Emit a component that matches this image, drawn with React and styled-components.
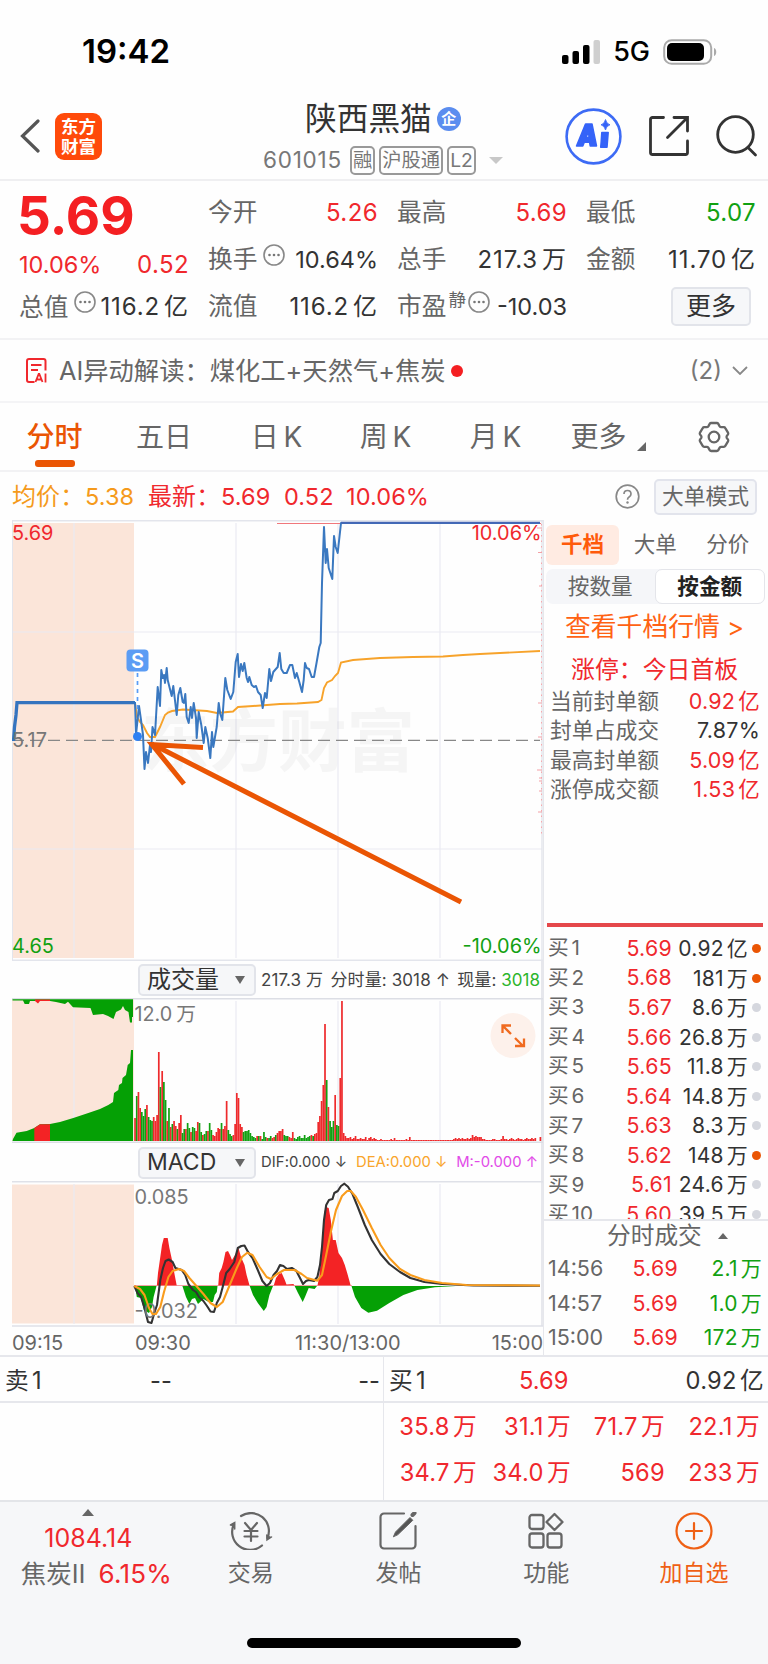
import React from "react";
import styled, { createGlobalStyle } from "styled-components";

const RED = "#f0282d";
const GREEN = "#12a112";
const ORANGE = "#ea5504";
const GRAY = "#666";
const DARK = "#333";
const LINE = "#e6e7ec";

const Global = createGlobalStyle`
  * { box-sizing: border-box; }
  body { margin: 0; background: #fefefe; }
  svg { display: block; flex: none; }
  svg text { font-family: Inter, "Noto Sans CJK SC", sans-serif; }
`;

const Screen = styled.div`
  width: 768px;
  height: 1664px;
  overflow: hidden;
  display: flex;
  flex-direction: column;
  background: #fefefe;
  color: ${DARK};
  font-family: Inter, "Noto Sans CJK SC", sans-serif;
  font-size: 24px;
  line-height: 1;
  white-space: nowrap;
`;

const Text = styled.span`
  font-size: ${(p) => p.$size || 24}px;
  color: ${(p) => p.$color || "inherit"};
  font-weight: ${(p) => p.$weight || 400};
  letter-spacing: ${(p) => p.$track || 0}px;
`;

/* an amount followed by its unit, set close together */
const Unit = styled.span`
  word-spacing: -0.15em;
  letter-spacing: ${(p) => (p.$wide ? 0.9 : 0.25)}px;
`;
const RowLabel = styled.span`
  word-spacing: -0.14em;
`;

/* ---------- status bar ---------- */
const StatusBar = styled.div`
  height: 95px;
  padding: 8px 51px 0 82px;
  display: flex;
  align-items: center;
  justify-content: space-between;
  color: #000;
`;
const StatusIcons = styled.div`
  display: flex;
  align-items: center;
  gap: 13px;
`;

/* ---------- header ---------- */
const Header = styled.header`
  height: 86px;
  display: flex;
  justify-content: space-between;
  padding: 0 10px 0 20px;
  border-bottom: 2px solid #efeff1;
`;
const HeaderSide = styled.div`
  display: flex;
  align-items: center;
  width: 238px;
  padding-bottom: 2px;
  gap: ${(p) => p.$gap}px;
  justify-content: ${(p) => (p.$end ? "flex-end" : "flex-start")};
`;
const Logo = styled.div`
  width: 47px;
  height: 47px;
  border-radius: 9px;
  background: #ff4a0a;
  color: #fff;
  font: 700 17.5px/20.5px "Noto Sans CJK SC", sans-serif;
  display: flex;
  align-items: center;
  justify-content: center;
  text-align: center;
`;
const TitleBlock = styled.div`
  display: flex;
  flex-direction: column;
  padding-top: 7px;
  width: 260px;
`;
const TitleRow = styled.div`
  display: flex;
  align-items: center;
  height: 34px;
  padding-left: 46px;
  gap: 5px;
`;
const Verified = styled.span`
  width: 24px;
  height: 24px;
  border-radius: 50%;
  background: #5b8def;
  color: #fff;
  font-size: 15px;
  font-weight: 700;
  line-height: 24px;
  text-align: center;
`;
const CodeRow = styled.div`
  display: flex;
  align-items: center;
  gap: 4px;
  padding: 0 16px 0 4px;
  margin-top: 10px;
  color: #777;
`;
const Code = styled.span`
  width: 83px;
  font-size: 22.5px;
  letter-spacing: 0.75px;
`;
const Badge = styled.span`
  height: 29px;
  padding: 0 1px;
  border: 2px solid #999;
  border-radius: 5px;
  color: #777;
  font-size: 19.3px;
  line-height: 25px;
`;
const Caret = styled.i`
  border: ${(p) => p.$w}px solid transparent;
  border-bottom-width: 0;
  border-top: ${(p) => p.$h}px solid ${(p) => p.$color};
  transform: ${(p) => (p.$up ? "rotate(180deg)" : "none")};
`;

/* ---------- quote ---------- */
const Quote = styled.section`
  height: 159px;
  display: grid;
  grid-template-columns: repeat(4, 170px);
  column-gap: 19px;
  padding: 8px 0 0 19px;
  border-bottom: 2px solid #f2f2f4;
`;
const QuoteColumn = styled.div`
  display: flex;
  flex-direction: column;
`;
const Stat = styled.div`
  height: ${(p) => p.$h || 47}px;
  display: flex;
  align-items: center;
  justify-content: space-between;
  letter-spacing: 0.4px;
  color: ${(p) => p.$color || DARK};
`;
const StatLabel = styled.span`
  display: flex;
  align-items: center;
  gap: 6px;
  letter-spacing: 0;
  color: ${GRAY};
  font-size: 24.7px;
`;
const PeLabel = styled(StatLabel)`
  gap: 2px;
`;
const Raised = styled.span`
  font-size: 17.5px;
  padding-bottom: 14px;
`;
const BigPrice = styled.div`
  height: 57px;
  margin-left: -2px;
  font-size: 53px;
  font-weight: 650;
  line-height: 54px;
  color: #f41f22;
`;
const MoreButton = styled.button`
  margin: 4px 5px 0 85px;
  height: 39px;
  border: 2px solid #e2e4ea;
  border-radius: 5px;
  background: #f6f7f9;
  color: #333;
  font: 400 25px/1 Inter, "Noto Sans CJK SC", sans-serif;
  padding: 0;
`;

/* ---------- AI line ---------- */
const AiLine = styled.div`
  height: 63px;
  display: flex;
  align-items: center;
  padding: 0 20px 0 26px;
  border-bottom: 2px solid #f4f4f6;
  color: ${GRAY};
`;
const AiText = styled.span`
  margin: 0 5px 0 12px;
  font-size: 25.3px;
`;
const AiCount = styled.span`
  margin-right: 10px;
  color: #777;
`;
const Dot = styled.i`
  width: ${(p) => p.$d}px;
  height: ${(p) => p.$d}px;
  border-radius: 50%;
  background: ${(p) => p.$color};
`;
const Spacer = styled.i`
  flex: 1;
`;

/* ---------- tabs ---------- */
const Tabs = styled.nav`
  height: 69px;
  display: flex;
  border-bottom: 2px solid #f2f2f4;
`;
const Tab = styled.div`
  width: ${(p) => p.$w}px;
  display: flex;
  flex-direction: column;
  align-items: center;
  padding-top: 20px;
  font-size: 28px;
  word-spacing: -3px;
  color: ${(p) => (p.$active ? ORANGE : GRAY)};
  font-weight: ${(p) => (p.$active ? 500 : 400)};
  &::after {
    content: "";
    width: 40px;
    height: 7px;
    margin-top: 9px;
    border-radius: 3px;
    background: ${(p) => (p.$active ? ORANGE : "transparent")};
  }
`;
const GearTab = styled(Tab)`
  padding-top: 18px;
`;
const TabMore = styled.span`
  display: flex;
  align-items: flex-end;
  gap: 10px;
`;

/* ---------- summary line ---------- */
const Summary = styled.div`
  height: 48px;
  display: flex;
  align-items: center;
  padding: 1px 11px 0 12px;
`;
const SummaryItem = styled.span`
  width: ${(p) => p.$w}px;
  font-size: ${(p) => (p.$w > 70 ? 24 : 23.5)}px;
  letter-spacing: 0.1px;
  color: ${(p) => p.$color};
`;
const ModeButton = styled.button`
  width: 103px;
  height: 36px;
  margin-left: 14px;
  border: 2px solid #e2e4ec;
  border-radius: 5px;
  background: #f6f7f9;
  color: #666;
  font: 400 21.8px/1 Inter, "Noto Sans CJK SC", sans-serif;
  padding: 0;
`;

/* ---------- main area ---------- */
const Main = styled.main`
  height: 837px;
  flex: none;
  display: flex;
  border-bottom: 2px solid ${LINE};
`;
const Charts = styled.div`
  width: 543px;
  padding-left: 12px;
  display: flex;
  flex-direction: column;
`;
const IndicatorBar = styled.div`
  height: ${(p) => p.$h}px;
  flex: none;
  display: flex;
  align-items: center;
  padding: 1px 0 0 126px;
  border-right: 2px solid ${LINE};
`;
const Select = styled.div`
  width: 118px;
  height: 32px;
  margin-right: 5px;
  padding: 0 9px 0 7px;
  display: flex;
  align-items: center;
  justify-content: space-between;
  border: 2px solid #e2e4ea;
  border-radius: 5px;
  background: #f6f7f9;
  font-size: ${(p) => p.$size}px;
`;
const IndicatorText = styled.div`
  flex: 1;
  display: flex;
  justify-content: space-between;
  padding-right: ${(p) => p.$right}px;
  font-size: ${(p) => p.$size}px;
  letter-spacing: 0.1px;
  color: #444;
`;
const TimeAxis = styled.div`
  display: flex;
  align-items: center;
  height: 28px;
  padding-top: 3px;
  font-size: 20px;
  color: ${GRAY};
  span:nth-child(1) { width: 123px; }
  span:nth-child(2) { width: 160px; }
  span:nth-child(3) { flex: 1; }
`;

const Book = styled.aside`
  width: 225px;
  display: flex;
  flex-direction: column;
  border-left: 1px solid ${LINE};
`;
const BookTabs = styled.div`
  height: 40px;
  margin: 5px 4px 0 2px;
  display: grid;
  grid-template-columns: 73px 1fr 1fr;
  font-size: 21.5px;
  color: ${GRAY};
`;
const BookTab = styled.div`
  display: flex;
  align-items: center;
  justify-content: center;
  border-radius: 6px;
  background: ${(p) => (p.$active ? "#ffebe2" : "transparent")};
  color: ${(p) => (p.$active ? "#ff5a0a" : GRAY)};
  font-weight: ${(p) => (p.$active ? 700 : 400)};
`;
const Segments = styled.div`
  height: 35px;
  margin: 4px 3px 0 2px;
  display: flex;
  background: #f5f6f9;
  border-radius: 7px;
`;
const Segment = styled.div`
  flex: 1;
  display: flex;
  align-items: center;
  justify-content: center;
  font-size: 21.6px;
  border-radius: 7px;
  border: ${(p) => (p.$active ? "1px solid #e4e5ea" : "0")};
  background: ${(p) => (p.$active ? "#fff" : "transparent")};
  color: ${(p) => (p.$active ? "#222" : GRAY)};
  font-weight: ${(p) => (p.$active ? 700 : 400)};
`;
const BookLink = styled.div`
  height: 46px;
  padding-left: 21px;
  display: flex;
  align-items: center;
  font-size: 25.8px;
  color: #ff6213;
`;
const LimitTitle = styled.div`
  height: 33px;
  margin-top: 4px;
  padding-left: 27px;
  display: flex;
  align-items: center;
  font-size: 23.9px;
  color: ${RED};
`;
const LimitRow = styled.div`
  height: 29.5px;
  padding: 0 8px 0 6px;
  display: flex;
  align-items: center;
  justify-content: space-between;
  font-size: 21.5px;
  color: ${(p) => (p.$plain ? DARK : RED)};
`;
const RedRule = styled.div`
  height: 4px;
  margin: 118px 5px 7px 3px;
  background: #e5484b;
`;
const Levels = styled.div`
  height: 287px;
  overflow: hidden;
  border-bottom: 2px solid ${LINE};
`;
const Level = styled.div`
  height: 29.55px;
  padding: 0 7px 0 4px;
  display: grid;
  grid-template-columns: 60px 64px 76px 1fr;
  align-items: center;
  justify-items: end;
  font-size: 21px;
  span:first-child { justify-self: start; color: ${GRAY}; font-size: 20.7px; }
`;
const TradesHead = styled.div`
  height: 31px;
  padding: 0 40px 0 63px;
  display: flex;
  align-items: center;
  justify-content: space-between;
  font-size: 23.7px;
  color: ${GRAY};
`;
const Trade = styled.div`
  height: 34.5px;
  padding: 0 6px 0 4px;
  display: grid;
  grid-template-columns: 72px 58px 1fr;
  align-items: center;
  justify-items: end;
  font-size: 21px;
  color: ${GREEN};
  span:first-child { justify-self: start; color: ${GRAY}; font-size: 21.5px; }
`;

/* ---------- best bid / ask ---------- */
const Orders = styled.section`
  height: 143px;
  flex: none;
  display: grid;
  grid-template-columns: 384px 384px;
  grid-template-rows: 46px 97px;
`;
const OrderHead = styled.div`
  display: grid;
  grid-template-columns: 130px 1fr 1fr;
  align-items: center;
  padding: 4px ${(p) => (p.$buy ? 4 : 3)}px 0 5px;
  border-bottom: 2px solid ${LINE};
  border-right: ${(p) => (p.$buy ? 0 : 1)}px solid ${LINE};
  font-size: 23.7px;
  span:last-child { justify-self: end; }
`;
const OrderDash = styled.span`
  padding-left: 15px;
`;
const OrderCells = styled.div`
  display: grid;
  grid-template-columns: 92px 94px 94px 95px;
  grid-template-rows: 46px 46px;
  padding: 1px 0 0 1px;
  align-items: center;
  justify-items: end;
  color: ${RED};
  font-size: 23.7px;
`;
const OrderBlank = styled.div`
  border-right: 1px solid ${LINE};
`;

/* ---------- bottom bar ---------- */
const Bottom = styled.footer`
  flex: 1;
  display: flex;
  flex-direction: column;
  align-items: center;
  justify-content: space-between;
  padding-bottom: 16px;
  background: #f6f7f9;
  border-top: 2px solid #e3e5e9;
`;
const NavRow = styled.div`
  width: 768px;
  height: 95px;
  display: flex;
`;
const IndexBox = styled.div`
  width: 177px;
  display: flex;
  flex-direction: column;
  align-items: center;
  padding: 7px 0 0 0;
  gap: 10px;
`;
const IndexName = styled.div`
  display: flex;
  align-items: center;
  gap: 13px;
  padding-left: 16px;
  font-size: 25.5px;
  color: ${GRAY};
`;
const NavItem = styled.div`
  width: 148px;
  display: flex;
  flex-direction: column;
  align-items: center;
  padding-top: 10px;
  gap: 12px;
  font-size: 23px;
  color: ${(p) => (p.$accent ? "#ef6014" : GRAY)};
`;
const HomeBar = styled.div`
  width: 274px;
  height: 10px;
  border-radius: 5px;
  background: #000;
`;

/* ---------- icons ---------- */
const Signal = () => (
  <svg width="38" height="24" viewBox="0 0 38 24">
    <rect x="0" y="15" width="6.500" height="9" rx="2" />
    <rect x="10.500" y="11" width="6.500" height="13" rx="2" />
    <rect x="21" y="5" width="6.500" height="19" rx="2" />
    <rect x="31.500" y="0" width="6.500" height="24" rx="2" fill="#cfcfcf" />
  </svg>
);
const Battery = () => (
  <svg width="54" height="26" viewBox="0 0 54 26">
    <rect x="1.200" y="1.200" width="47" height="23.600" rx="7.500" fill="none" stroke="#aaa" strokeWidth="2" />
    <rect x="4" y="4" width="37" height="18" rx="5" />
    <path d="M51 9c3 1 3 7 0 8z" fill="#aaa" />
  </svg>
);
const Back = () => (
  <svg width="20" height="34" viewBox="0 0 20 34" fill="none" stroke="#555" strokeWidth="3.200" strokeLinecap="round">
    <path d="M18 2 2.500 17 18 32" />
  </svg>
);
const AiIcon = () => (
  <svg width="57" height="57" viewBox="0 0 57 57">
    <circle cx="28.500" cy="28.500" r="26.900" fill="none" stroke="#3d6bf5" strokeWidth="2.600" />
    <g fill="#3563f8" stroke="#3563f8" strokeWidth="1.500" strokeLinejoin="round">
      <path d="M20.500 16H27L31.500 38H25.200L24.600 34.300H19.300L17.800 38H11.500ZM21 29.500H24L23.600 23.500Z" />
      <path d="M36.800 24.500H43.200L42 39.300H35.700L36.200 33.500Z" />
    </g>
    <path d="M40.500 11.500q1 4.500 4.500 5.300-3.700 1-4.500 5.200-1-4.300-4.500-5.200 3.500-.8 4.500-5.300z" fill="#3563f8" stroke="#3563f8" strokeWidth="0.800" />
  </svg>
);
const Share = () => (
  <svg width="40" height="40" viewBox="0 0 40 40" fill="none" stroke="#333" strokeWidth="2.800" strokeLinecap="round">
    <path d="M14.500 1.500H3.500a2 2 0 0 0-2 2v33a2 2 0 0 0 2 2h33a2 2 0 0 0 2-2V25M25 1.500h13.500V15M37.500 2.500 18.500 21.500" />
  </svg>
);
const Search = () => (
  <svg width="42" height="42" viewBox="0 0 42 42" fill="none" stroke="#333" strokeWidth="2.800" strokeLinecap="round">
    <circle cx="19.500" cy="19.500" r="17.800" />
    <path d="m32 32.500 7.500 7.500" />
  </svg>
);
const InfoMark = styled.svg`
  margin-bottom: 10px;
`;
const Info = () => (
  <InfoMark width="22" height="22" viewBox="0 0 22 22">
    <circle cx="11" cy="11" r="10" fill="none" stroke="#888" strokeWidth="1.600" />
    <g fill="#777">
      <circle cx="6.500" cy="11" r="1.300" />
      <circle cx="11" cy="11" r="1.300" />
      <circle cx="15.500" cy="11" r="1.300" />
    </g>
  </InfoMark>
);
const AiNote = () => (
  <svg width="21" height="25" viewBox="0 0 21 25" fill="none" stroke="#f0282d" strokeWidth="2">
    <path d="M8.500 24H3q-2 0-2-2V3q0-2 2-2H17.500q2 0 2 2v9.500M5 7h10.500M5 12h7" />
    <path d="m9.500 24 3.200-8h.6l3.200 8M11 21.500h4M19.500 15.500v9" strokeWidth="1.800" />
  </svg>
);
const Chevron = () => (
  <svg width="16" height="9" viewBox="0 0 16 9" fill="none" stroke="#888" strokeWidth="1.800">
    <path d="m1 1 7 7 7-7" />
  </svg>
);
const Corner = () => (
  <svg width="9" height="9" viewBox="0 0 9 9">
    <path d="M9 0V9H0z" fill="#666" />
  </svg>
);
const Gear = () => (
  <svg width="32" height="32" viewBox="0 0 32 32" fill="none" stroke="#666" strokeWidth="2.300" strokeLinejoin="round">
    <path d="M13.200 2h5.600q1 0 1.500.9l1.400 2.500q.5.800 1.500.8h2.600q1 0 1.500.9l2.700 4.500q.5.900 0 1.800L28.700 15.200q-.4.800 0 1.600L30 18.600q.5.900 0 1.800l-2.700 4.500q-.5.900-1.500.9H23.200q-1 0-1.500.8l-1.400 2.500q-.5.900-1.500.9H13.200q-1 0-1.500-.9L10.300 26.600q-.5-.8-1.500-.8H6.200q-1 0-1.500-.9L2 20.400q-.5-.9 0-1.800L3.300 16.800q.4-.8 0-1.600L2 13.400q-.5-.9 0-1.800L4.700 7.100q.5-.9 1.500-.9H8.800q1 0 1.500-.8l1.400-2.500q.5-.9 1.500-.9z" />
    <circle cx="16" cy="16" r="5.300" />
  </svg>
);
const Help = () => (
  <svg width="25" height="25" viewBox="0 0 25 25">
    <circle cx="12.500" cy="12.500" r="11.300" fill="none" stroke="#888" strokeWidth="1.700" />
    <path d="M9 10q0-3.500 3.500-3.500T16 10q0 1.800-1.900 3-1.600 1-1.600 2.700" fill="none" stroke="#888" strokeWidth="1.700" />
    <circle cx="12.500" cy="18.500" r="1.200" fill="#888" />
  </svg>
);
const TradeIcon = () => (
  <svg width="44" height="38" viewBox="0 0 44 38" fill="none" stroke="#666" strokeWidth="2.200" strokeLinecap="round">
    <path d="M12 4A18 18 0 0 1 38.500 26M33 33.500A18 18 0 0 1 5 12" />
    <path d="m1.500 13 4.200-2.500V17M42.500 25l-4.500 3-.2-5" fill="#666" strokeWidth="1.500" />
    <path d="m16 11 6 7 6-7M15.500 19h13M15.500 24.500h13M22 18v11" />
  </svg>
);
const PostIcon = () => (
  <svg width="38" height="38" viewBox="0 0 38 38" fill="none" stroke="#666" strokeWidth="2.200" strokeLinecap="round">
    <path d="M25 1.500H5a3.500 3.500 0 0 0-3.500 3.500v28A3.500 3.500 0 0 0 5 36.500h28a3.500 3.500 0 0 0 3.500-3.500V14" />
    <path d="m14.500 24.500 2-4.500L31 5.500l2.800 2.800L19 22.500z" fill="#555" strokeWidth="1" />
    <path d="m33.500 3 2-2" strokeWidth="4" />
  </svg>
);
const GridIcon = () => (
  <svg width="38" height="38" viewBox="0 0 38 38" fill="none" stroke="#666" strokeWidth="2.300" strokeLinejoin="round">
    <rect x="2.500" y="3" width="14" height="14" rx="2.500" />
    <rect x="2.500" y="21.500" width="14" height="14" rx="2.500" />
    <rect x="20.500" y="21.500" width="14" height="14" rx="2.500" />
    <path d="m27.500 2 8 8-8 8-8-8z" />
  </svg>
);
const PlusIcon = () => (
  <svg width="38" height="38" viewBox="0 0 38 38" fill="none" stroke="#ef6014" strokeWidth="2.200" strokeLinecap="round">
    <circle cx="19" cy="19" r="17.500" />
    <path d="M19 11v16M11 19h16" />
  </svg>
);

/* ---------- chart data ---------- */
const price =
  "135,702 136,735 139,706 141,720 143,735 144.500,769 146,752 148,763 150,745 151,752 152.500,727 155,735 157.700,687 160,706 161.300,670 162.700,678 164,675 165,683 166.700,668 167.700,680 171.700,696 173.300,686 176.700,715 178.300,695 180.300,688 182.700,702 184,703 185.300,694 186.700,717 188.700,723 190.700,707 192,718 193.700,703 196,718 196.700,738 198.700,712 201.300,725 203.700,743 205.300,727 207.700,738 210.300,758 212,732 213.300,747 216.700,727 218.700,703 220.300,714 222.300,720 225.300,678 227.300,690 230.700,699 233.300,692 235.700,662 237.700,654 239,677 241,664 242.700,671 244.300,663 246.700,678 248,682 249.300,677 251.700,685 254,687 256,686 258,692 260.700,695 262.700,708 265,693 266.700,698 269.300,669 271,681 273.300,672 275,670 277.700,667 279.700,653 281.300,669 283.700,673 286.700,673 290,665 292.300,665 295,678 296.700,673 299.300,682 302,692 303.700,680 305,663 306.700,668 309,669 311.700,677 314,677 316.700,662 319.300,647 320.700,643 322,583 324,527 325.700,563 327,549 328.700,568 332.300,579 334,536 335.700,547 337.700,553 341,523 540,523";
const average =
  "135,703 137,717 140,722 143,725 147,733 150,737 155,737 160,727 165,715 168,712.500 172,711 183,709.500 207,711 217,713 233,711.500 238,707 253,706 280,704 297,703.500 318,702 321.500,700 324,688 327,682.500 332,680 335,676 338,673 341,662.500 353,660 380,658 413,657 443,656.500 463,655 480,654 540,651";
const session =
  "23r 45g 49r 33r 29g 25g 32g 36r 24g 21g 20g 24r 20r 26r 89r 54g 70r 59g 41g 20r 33g 14r 17g 20r 15r 12g 18r 26r 8g 12g 12r 18g 13g 9r 14g 13g 10r 19r 18g 9g 6r 7g 10g 10r 18g 11g 6r 5r 9r 13r 12r 18g 12r 15r 40r 11g 7g 5g 6r 17r 48r 43r 17r 14r 9g 10g 10g 11g 8g 5g 4g 3g 5r 5g 5r 2g 9g 4g 3r 3g 5g 3r 4r 6g 8r 10r 10r " +
  "12r 6g 5g 5g 4r 3r 9r 3g 2g 4g 5g 3g 3g 6g 3g 4g 5g 6r 5g 7r 8r 19r 25r 40r 56r 117r 61g 34r 20g 14g 20g 46r 16g 15g 63r 140r 8r 5r 3r 3r 4r 2r 3r 5r 2r 2r 3r 2r 2r 4r 1r 3r 4r 2r 3r 2r 1r 1r 2r 1r 1r 1r 1r 1r 2r 1r 3r 1r 1r 1r 1r 1r 1r 2r 1r 4r";
const closing =
  "2r 3r 2r 3r 2r 3r 2r 2r 3r 2r 3r 6r 4r 5r 4r 4r 4r 2r 2r 1r 1r 1r 1r 2r 2r 1r 1r 1r 2r 5r 2r 2r 1r 2r 3r 2r 1r 2r 3r 2r 2r 1r 2r 3r 2r 2r 3r 2r 3r";
const bars = (list, start) => list.split(" ").map((d, i) => ({ slot: start + i, h: parseInt(d, 10), up: d.endsWith("r") }));
const CLOSING_START = 188;
const first = bars(session, 0);
const volume = [
  ...first,
  ...Array.from({ length: CLOSING_START - first.length }, (_, i) => ({ slot: first.length + i, h: 1, up: true })),
  ...bars(closing, CLOSING_START),
  { slot: 239, h: 4, up: true },
];
const dif =
  "134.300,1286 137.500,1293 141,1297 144.500,1308 148,1322 151.500,1323 154.300,1313 157,1305 160.300,1280 163,1268 165.500,1261 168.700,1259.500 172.600,1262 175.400,1268 181.700,1270 185.200,1275 188.400,1284 193,1290 196,1292 199,1297 203.400,1301 207,1306 210.500,1311.500 214,1312 216.800,1303 220,1297 222.700,1287 226.200,1273 229.700,1269 234.300,1262 237.800,1248 241.300,1246 244.500,1245.500 248,1252 252.500,1258 257.800,1270 262.400,1281 266.600,1286 270,1283 273.600,1275 277,1271 280,1265 283.400,1266 287,1269 291.800,1268 296.400,1271 300,1278 303,1284 306,1281 308.700,1280 314,1281 317.400,1277 320,1265 322,1247 324,1220 326.200,1205 329,1200 332.500,1199 334.300,1193 337.800,1191 341,1186 344.400,1183.700 348,1186.700 352.500,1194 357.800,1207 364.800,1225 371.800,1240 380.600,1254 389.300,1264 400,1272 410.400,1278 424.400,1282 442,1284 473.500,1285.500 540,1285.700";
const dea =
  "134.300,1286 140,1289 144.500,1295 149,1308 152.500,1314 156,1314 160.300,1307 164,1292 168.400,1277 172.600,1271 179,1269 184,1271 189.400,1278 196.400,1286 203.400,1294 210.500,1303 216.800,1307 222.700,1302 229.700,1285 236.800,1268 242,1257 247.300,1252.700 252.500,1255 259.600,1267 266.600,1277 270.800,1279 277,1274 284,1270 294.600,1270 301.600,1274 307,1278 317.400,1280.700 322,1275 326.200,1255 330.800,1232 336,1210 342,1196 347.200,1191 350.800,1191 356,1197 363,1210 371.800,1228 380.600,1245 389.300,1258 400,1269 410.400,1275 424.400,1280 442,1283 466.500,1285 540,1285.500";
const macdRed = [
  "156.800,1286 158,1273 160.300,1257 162,1245 163.800,1238 167.700,1238 169.400,1248 172,1260 174.300,1273 176.800,1286",
  "218.200,1286 219.200,1273 221.700,1268 223.400,1262 225.500,1252 228,1251 230,1255 232,1260 235,1255 238.500,1248 241,1257 244.500,1265 246.600,1275 249.700,1286",
  "273.600,1286 276,1278 279,1274 281.700,1273 284.800,1280 286.500,1284.500 293.500,1284 294.600,1286",
  "317.400,1286 319.200,1277 322,1250 324.400,1212 326,1207 328.700,1208 330.800,1220 332.900,1240 335.700,1240 338.500,1253 342,1258 344.800,1265 347.200,1273 350.800,1286",
];
const macdGreen = [
  "135,1286 136.800,1297 141,1298 143.800,1310 149,1313 152,1307 153.600,1297 156,1288 156.500,1286",
  "182.400,1286 186,1297 189.400,1304 192,1299 195,1298 198,1304 203.400,1299 208.700,1302 213,1302 214.700,1295 216.800,1292 217.500,1286",
  "249.700,1286 253,1295 257.800,1303 263.800,1311 266.600,1307 269.400,1295 273,1286",
  "294.600,1286 298,1293 302.700,1302 305,1297 308.700,1288 314.600,1289 317,1286",
  "351.500,1286 355,1297 361.300,1308 368.300,1312.700 377,1310.700 389.300,1303 403.400,1295 417.400,1290 435,1287.300 456,1286",
];

const GridV = ({ top, bottom }) => (
  <path
    d={[74, 236, 338, 440].map((x) => `M${x} ${top}V${bottom}`).join("")}
    stroke="#e9e9f2"
    strokeWidth="1.200"
  />
);

const PriceChart = () => (
  <svg width="531" height="441" viewBox="12 520 531 441">
    <rect x="12" y="523" width="122" height="435" fill="#fbe5d9" />
    <GridV top={523} bottom={958} />
    <path d="M12 632H542M12 849H542" stroke="#e9e9f2" strokeWidth="1.200" />
    <path d="M12 520.700H543M12 960.300H543M12.300 521V960M542 521V960" stroke="#e3e5ec" strokeWidth="1.400" fill="none" />
    <text x="141" y="766" fontSize="68.500" fontWeight="700" fill="#000" opacity="0.033">东方财富</text>
    <path d="M12 740.300H540" stroke="#888" strokeWidth="1.300" strokeDasharray="12 6" />
    <path d="M277 523.500H541" stroke="#f0777c" strokeWidth="1" />
    <path d="M541.500 524V835" stroke="#f6a8ac" strokeWidth="1" strokeDasharray="1.500 4" />
    <path d="M537 528h5M538 552.500h4M539 586h3M538 703h4M538 737h4M537 770h5M538 812h4M539 778h3M539 781h3M539 791h3" stroke="#f4a0a5" strokeWidth="1.200" />
    <polyline points={average} fill="none" stroke="#f7a32b" strokeWidth="1.900" />
    <polyline points={price} fill="none" stroke="#3a78c0" strokeWidth="2" strokeLinejoin="round" />
    <path d="M341 522.800H540" stroke="#4566b4" strokeWidth="2" />
    <path d="M13.500 741 14.500 727 16 715 17 702.700H135" fill="none" stroke="#3574bf" strokeWidth="3.300" />
    <path d="M137.500 673V710" stroke="#5a9cf5" strokeWidth="1.700" strokeDasharray="4 4" />
    <circle cx="137.500" cy="736.500" r="4.500" fill="#2f80f2" />
    <rect x="126.500" y="649.500" width="22" height="22" rx="4" fill="#5b9cf4" />
    <text x="137.500" y="667.500" fontSize="20" fontWeight="600" fill="#fff" textAnchor="middle">S</text>
    <path d="M152 744 461 902M203 747.500 152 744.500 184 784" fill="none" stroke="#ea5504" strokeWidth="5" />
    <text x="12" y="540" fontSize="19.900" fill={RED}>5.69</text>
    <text x="12" y="746.500" fontSize="19.900" fill="#777">5.17</text>
    <text x="12" y="952.500" fontSize="19.900" fill={GREEN}>4.65</text>
    <text x="541.500" y="540" fontSize="19.900" fill={RED} textAnchor="end">10.06%</text>
    <text x="541.500" y="952.500" fontSize="19.900" fill={GREEN} textAnchor="end">-10.06%</text>
  </svg>
);

const VolumeChart = () => (
  <svg width="531" height="145" viewBox="12 998 531 145">
    <rect x="12" y="999" width="122" height="142" fill="#fbe5d9" />
    <GridV top={1001} bottom={1141} />
    <path d="M12 998.700H543M12 1142.300H543M542 998V1142" stroke="#dcdee5" strokeWidth="1.500" />
    <path d="M12.500 1141 13 1139 16.500 1132.700 26.700 1131 34.300 1128 40 1124.300 50 1124 60 1122 73.300 1118 88.300 1113 100 1109 108.300 1105 113 1102 114 1093 118.300 1090 119 1085 122 1083 122.500 1078 126 1075 127.700 1065 130 1063 131 1050H133V1141z" fill="#05a005" />
    <path d="M34.300 1141V1128L40 1124.300H50V1141z" fill="#f32325" />
    <path d="M12.500 999.300V1000.500H23L24.700 1004H29L30 1001H50L56 1002 65 1004 68 1001.700 73 1007.300 90.500 1008 93 1015 103 1014 108 1016 113.500 1019 116 1012 121 1009.500 123 1006 125 1010 128.500 1012 130 1022.500H132V1017H133V999.300z" fill="#05a005" />
    <path d="M35 999.500V1001L38 1003.500 40 1001H50V999.500z" fill="#f32325" />
    {volume.map(({ slot, h, up }) => (
      <rect
        key={slot}
        x={134.2 + slot * 1.696}
        y={1141 - h}
        width={1.7}
        height={h}
        fill={up ? "#ee2a2c" : "#12a012"}
      />
    ))}
    <text x="134.500" y="1020.500" fontSize="19.800" fill="#777" wordSpacing="-1.500">12.0 万</text>
    <circle cx="513" cy="1035.500" r="22.500" fill="#fdf1eb" />
    <path d="M502.500 1033V1025.500H511M503 1026 511 1034M515 1038 523 1046M524 1038.500V1046H515" fill="none" stroke="#f06a1f" strokeWidth="2.300" />
  </svg>
);

const MacdChart = () => (
  <svg width="531" height="146" viewBox="12 1181 531 146">
    <rect x="12" y="1184.500" width="122" height="139" fill="#fbe5d9" />
    <GridV top={1184} bottom={1324} />
    <path d="M12 1181.700H543M12 1326H543M542 1181V1326" stroke="#dfe1e8" strokeWidth="1.500" />
    {macdRed.map((p) => (
      <polygon key={p} points={p} fill="#f32325" />
    ))}
    {macdGreen.map((p) => (
      <polygon key={p} points={p} fill="#05a005" />
    ))}
    <path d="M134 1285.500H352" stroke="#f0888a" strokeWidth="0.800" />
    <polyline points={dif} fill="none" stroke="#333" strokeWidth="2.100" strokeLinejoin="round" />
    <text x="134.500" y="1204" fontSize="19.900" fill="#777">0.085</text>
    <text x="134.500" y="1318" fontSize="19.900" fill="#777">-0.032</text>
    <polyline points={dea} fill="none" stroke="#f99c1c" strokeWidth="2.100" strokeLinejoin="round" />
  </svg>
);

const limitRows = [
  ["当前封单额", "0.92 亿"],
  ["封单占成交", "7.87%"],
  ["最高封单额", "5.09 亿"],
  ["涨停成交额", "1.53 亿"],
];
const levels = [
  ["5.69", "0.92 亿", 1],
  ["5.68", "181 万", 1],
  ["5.67", "8.6 万", 0],
  ["5.66", "26.8 万", 0],
  ["5.65", "11.8 万", 0],
  ["5.64", "14.8 万", 0],
  ["5.63", "8.3 万", 0],
  ["5.62", "148 万", 1],
  ["5.61", "24.6 万", 0],
  ["5.60", "39.5 万", 0],
];
const trades = [
  ["14:56", "2.1 万"],
  ["14:57", "1.0 万"],
  ["15:00", "172 万"],
];
const queue = ["35.8 万", "31.1 万", "71.7 万", "22.1 万", "34.7 万", "34.0 万", "569", "233 万"];

export default function App() {
  return (
    <Screen>
      <Global />
      <StatusBar>
        <Text $size={33} $weight={600}>19:42</Text>
        <StatusIcons>
          <Signal />
          <Text $size={27} $weight={500}>5G</Text>
          <Battery />
        </StatusIcons>
      </StatusBar>

      <Header>
        <HeaderSide $gap={15}>
          <Back />
          <Logo>东方<br />财富</Logo>
        </HeaderSide>
        <TitleBlock>
          <TitleRow>
            <Text $size={31.7}>陕西黑猫</Text>
            <Verified>企</Verified>
          </TitleRow>
          <CodeRow>
            <Code>601015</Code>
            <Badge>融</Badge>
            <Badge>沪股通</Badge>
            <Badge>L2</Badge>
            <Spacer />
            <Caret $w={7} $h={7} $color="#c8c8c8" />
          </CodeRow>
        </TitleBlock>
        <HeaderSide $gap={27} $end>
          <AiIcon />
          <Share />
          <Search />
        </HeaderSide>
      </Header>

      <Quote>
        <QuoteColumn>
          <BigPrice>5.69</BigPrice>
          <Stat $h={38} $color={RED}>
            <Text $size={23.5}>10.06%</Text>
            <span>0.52</span>
          </Stat>
          <Stat $h={46}>
            <StatLabel>总值<Info /></StatLabel>
            <Unit $wide>116.2 亿</Unit>
          </Stat>
        </QuoteColumn>
        <QuoteColumn>
          <Stat $color={RED}><StatLabel>今开</StatLabel>5.26</Stat>
          <Stat><StatLabel>换手<Info /></StatLabel><Text $size={23.5}>10.64%</Text></Stat>
          <Stat><StatLabel>流值</StatLabel><Unit $wide>116.2 亿</Unit></Stat>
        </QuoteColumn>
        <QuoteColumn>
          <Stat $color={RED}><StatLabel>最高</StatLabel>5.69</Stat>
          <Stat><StatLabel>总手</StatLabel><Unit $wide>217.3 万</Unit></Stat>
          <Stat>
            <PeLabel>市盈<Raised>静</Raised><Info /></PeLabel>
            <Text $size={23.5}>-10.03</Text>
          </Stat>
        </QuoteColumn>
        <QuoteColumn>
          <Stat $color={GREEN}><StatLabel>最低</StatLabel>5.07</Stat>
          <Stat><StatLabel>金额</StatLabel><Unit $wide>11.70 亿</Unit></Stat>
          <MoreButton>更多</MoreButton>
        </QuoteColumn>
      </Quote>

      <AiLine>
        <AiNote />
        <AiText>AI异动解读：煤化工+天然气+焦炭</AiText>
        <Dot $d={12} $color="#f41f22" />
        <Spacer />
        <AiCount>(2)</AiCount>
        <Chevron />
      </AiLine>

      <Tabs>
        <Tab $w={109} $active>分时</Tab>
        <Tab $w={110}>五日</Tab>
        <Tab $w={115}>日 K</Tab>
        <Tab $w={103}>周 K</Tab>
        <Tab $w={117}>月 K</Tab>
        <Tab $w={108}>
          <TabMore>更多<Corner /></TabMore>
        </Tab>
        <GearTab $w={104}><Gear /></GearTab>
      </Tabs>

      <Summary>
        <SummaryItem $w={73} $color="#f59a1b">均价：</SummaryItem>
        <SummaryItem $w={63} $color="#f59a1b">5.38</SummaryItem>
        <SummaryItem $w={73} $color={RED}>最新：</SummaryItem>
        <SummaryItem $w={63} $color={RED}>5.69</SummaryItem>
        <SummaryItem $w={62} $color={RED}>0.52</SummaryItem>
        <SummaryItem $color={RED}>10.06%</SummaryItem>
        <Spacer />
        <Help />
        <ModeButton>大单模式</ModeButton>
      </Summary>

      <Main>
        <Charts>
          <PriceChart />
          <IndicatorBar $h={37}>
            <Select $size={24}>成交量<Caret $w={5} $h={8} $color="#666" /></Select>
            <IndicatorText $size={17} $right={1}>
              <span>217.3 万</span>
              <span>分时量: 3018 ↑</span>
              <span>现量: <Text $size={17} $color="#2cb52c">3018</Text></span>
            </IndicatorText>
          </IndicatorBar>
          <VolumeChart />
          <IndicatorBar $h={38}>
            <Select $size={23}>MACD<Caret $w={5} $h={8} $color="#666" /></Select>
            <IndicatorText $size={14.8} $right={3}>
              <span>DIF:0.000 ↓</span>
              <Text $size={14.8} $color="#f9a52b">DEA:0.000 ↓</Text>
              <Text $size={14.8} $color="#e24be8">M:-0.000 ↑</Text>
            </IndicatorText>
          </IndicatorBar>
          <MacdChart />
          <TimeAxis>
            <span>09:15</span>
            <span>09:30</span>
            <span>11:30/13:00</span>
            <span>15:00</span>
          </TimeAxis>
        </Charts>

        <Book>
          <BookTabs>
            <BookTab $active>千档</BookTab>
            <BookTab>大单</BookTab>
            <BookTab>分价</BookTab>
          </BookTabs>
          <Segments>
            <Segment>按数量</Segment>
            <Segment $active>按金额</Segment>
          </Segments>
          <BookLink>查看千档行情&nbsp;&gt;</BookLink>
          <LimitTitle>涨停：今日首板</LimitTitle>
          {limitRows.map(([label, value]) => (
            <LimitRow key={label} $plain={value.endsWith("%")}>
              <Text $size={21.8} $color={GRAY}>{label}</Text>
              <Unit>{value}</Unit>
            </LimitRow>
          ))}
          <RedRule />
          <Levels>
            {levels.map(([p, amount, hot], i) => (
              <Level key={p}>
                <RowLabel>买 {i + 1}</RowLabel>
                <Text $size={21.3} $color={RED} $track={0.3}>{p}</Text>
                <Unit>{amount}</Unit>
                <Dot $d={9} $color={hot ? ORANGE : "#d5d7de"} />
              </Level>
            ))}
          </Levels>
          <TradesHead>分时成交<Caret $w={5} $h={6} $color="#666" $up /></TradesHead>
          {trades.map(([time, amount]) => (
            <Trade key={time}>
              <span>{time}</span>
              <Text $size={21.3} $color={RED} $track={0.3}>5.69</Text>
              <Unit>{amount}</Unit>
            </Trade>
          ))}
        </Book>
      </Main>

      <Orders>
        <OrderHead>
          <RowLabel>卖 1</RowLabel>
          <OrderDash>--</OrderDash>
          <span>--</span>
        </OrderHead>
        <OrderHead $buy>
          <RowLabel>买 1</RowLabel>
          <Text $color={RED} $size={23.7}>5.69</Text>
          <Unit>0.92 亿</Unit>
        </OrderHead>
        <OrderBlank />
        <OrderCells>
          {queue.map((q) => (
            <Unit key={q}>{q}</Unit>
          ))}
        </OrderCells>
      </Orders>

      <Bottom>
        <NavRow>
          <IndexBox>
            <Caret $w={6} $h={7} $color="#666" $up />
            <Text $color={RED} $size={25}>1084.14</Text>
            <IndexName>
              <span>焦炭Ⅱ</span>
              <Text $color={RED} $size={26} $track={0.2}>6.15%</Text>
            </IndexName>
          </IndexBox>
          <NavItem><TradeIcon />交易</NavItem>
          <NavItem><PostIcon />发帖</NavItem>
          <NavItem><GridIcon />功能</NavItem>
          <NavItem $accent><PlusIcon />加自选</NavItem>
        </NavRow>
        <HomeBar />
      </Bottom>
    </Screen>
  );
}
